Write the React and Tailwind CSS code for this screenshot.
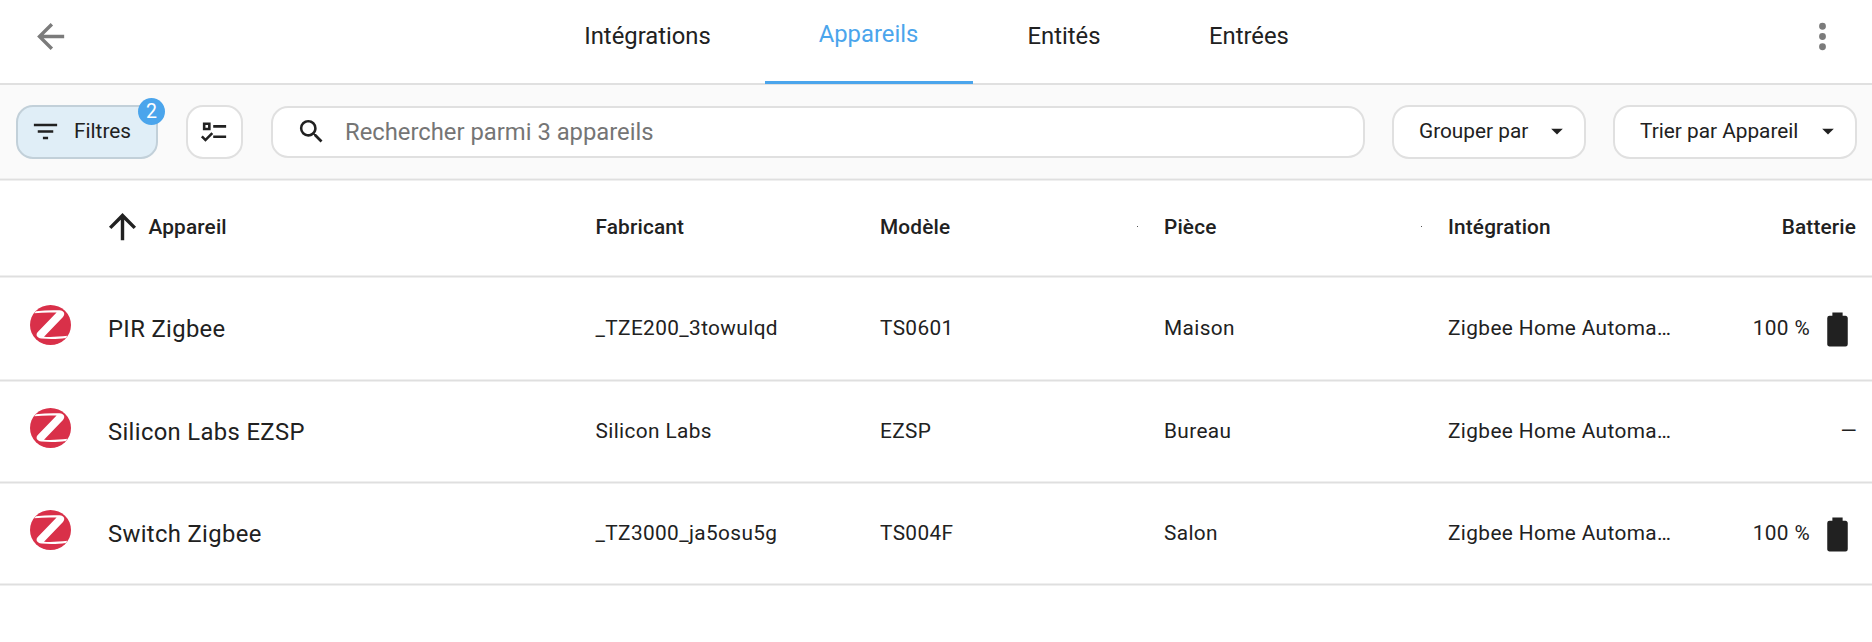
const COLS = 'grid-cols-[108px_487.5px_284.5px_284px_284px_284px_1fr]';

function Icon({ d, className }) {
  return (
    <svg viewBox="0 0 24 24" fill="currentColor" className={className}>
      <path d={d} />
    </svg>
  );
}

const ARROW_LEFT = 'M20 11v2H8l5.5 5.5-1.42 1.42L4.16 12l7.92-7.92L13.5 5.5 8 11h12Z';
const ARROW_UP = 'M13 20h-2V8l-5.5 5.5-1.42-1.42L12 4.16l7.92 7.92-1.42 1.42L13 8v12Z';
const DOTS = 'M12 16a2 2 0 1 1 0 4 2 2 0 0 1 0-4m0-6a2 2 0 1 1 0 4 2 2 0 0 1 0-4m0-6a2 2 0 1 1 0 4 2 2 0 0 1 0-4Z';
const FILTER = 'M6 13h12v-2H6M3 6v2h18V6M10 18h4v-2h-4v2Z';
const CHECKLIST = 'M3 5h6v6H3V5m2 2v2h2V7H5m6 0h10v2H11V7m0 8h10v2H11v-2m-6 5-3.5-3.5 1.41-1.41L5 17.17l4.59-4.58L11 14l-6 6Z';
const SEARCH = 'M9.5 3A6.5 6.5 0 0 1 16 9.5c0 1.61-.59 3.09-1.56 4.23l.27.27h.79l5 5-1.5 1.5-5-5v-.79l-.27-.27A6.516 6.516 0 0 1 9.5 16 6.5 6.5 0 0 1 3 9.5 6.5 6.5 0 0 1 9.5 3m0 2C7 5 5 7 5 9.5S7 14 9.5 14 14 12 14 9.5 12 5 9.5 5Z';
const CARET = 'm7 10 5 5 5-5H7Z';
const BATTERY = 'M16.67 4H15V2H9v2H7.33A1.33 1.33 0 0 0 6 5.33v15.34C6 21.4 6.6 22 7.33 22h9.34A1.33 1.33 0 0 0 18 20.67V5.33C18 4.6 17.4 4 16.67 4Z';

function ZigbeeLogo() {
  return (
    <svg viewBox="0 0 41 40" className="h-10 w-[41px]">
      <ellipse cx="20.5" cy="20" rx="20.5" ry="20" fill="#d93049" />
      <path
        fill="#fff"
        d="M6 6.3C14 5.2 22 5 29.5 5.3C34 5.6 35.6 9 33 12L14 31.7C21 32.2 29 31.7 37.5 30.8L35.7 33C28 34.2 19 34.2 11.500 33.6C6.500 33 5.300 29.500 8 26.800L26.600 7.600C19 7.200 12 7.400 4.300 8.300Z"
      />
    </svg>
  );
}

function Rule() {
  return <div className="h-[3px] border-y border-[#efefef] bg-[#dfdfdf]" />;
}

const rows = [
  { name: 'PIR Zigbee', maker: '_TZE200_3towulqd', model: 'TS0601', area: 'Maison', battery: '100 %', h: 'h-[101px]' },
  { name: 'Silicon Labs EZSP', maker: 'Silicon Labs', model: 'EZSP', area: 'Bureau', battery: null, h: 'h-[99px]' },
  { name: 'Switch Zigbee', maker: '_TZ3000_ja5osu5g', model: 'TS004F', area: 'Salon', battery: '100 %', h: 'h-[99px]' },
];

function Dropdown({ label, width }) {
  return (
    <button className={`flex h-[54px] shrink-0 items-center justify-between rounded-[17px] border-2 border-[#e0e0e0] bg-white pr-[13px] pl-[25px] ${width}`}>
      <span className="text-[20.8px]">{label}</span>
      <Icon d={CARET} className="mb-px size-[28px]" />
    </button>
  );
}

export default function App() {
  return (
    <div className="h-[642px] w-[1872px] overflow-hidden bg-white font-[Roboto,sans-serif] whitespace-nowrap text-[#212121]">
      <header className="flex h-[85px] justify-between border-b-2 border-[#e0e0e0] pr-[29px] pl-[30px]">
        <Icon d={ARROW_LEFT} className="mt-4 size-[41px] text-[#7b7b7b]" />
        <nav className="flex h-[84px] text-[23.8px]">
          <div className="flex h-[74px] w-[235px] items-center justify-center pl-px">Intégrations</div>
          <div className="flex w-[208px] justify-center border-b-[3px] border-[#4ba5ec] text-[#4ba5ec]">
            <span className="flex h-[70px] items-center">Appareils</span>
          </div>
          <div className="flex h-[74px] w-[182px] items-center justify-center pl-px">Entités</div>
          <div className="flex h-[74px] w-[189px] items-center justify-center">Entrées</div>
        </nav>
        <Icon d={DOTS} className="mt-4 size-[41px] text-[#7b7b7b]" />
      </header>

      <div className="flex h-[93px] items-center bg-[#fafafa] pr-[15px] pl-4">
        <button className="relative flex h-[54px] w-[142px] shrink-0 items-center rounded-[17px] border-2 border-[#c2d0d9] bg-[#e0eef7] pl-3">
          <Icon d={FILTER} className="mb-px size-[31px]" />
          <span className="ml-[13px] text-[20.8px]">Filtres</span>
          <span className="absolute -top-[9px] -right-[9px] flex size-[27px] items-center justify-center rounded-full bg-[#4ba5ec] pt-px text-[19.5px] text-white">2</span>
        </button>
        <button className="ml-7 flex h-[54px] w-[57px] shrink-0 items-center justify-center rounded-[17px] border-2 border-[#e0e0e0] bg-white">
          <Icon d={CHECKLIST} className="mb-px size-[31px]" />
        </button>
        <div className="ml-7 flex h-[52px] flex-1 items-center rounded-[17px] border-2 border-[#e0e0e0] bg-white pl-[23px]">
          <Icon d={SEARCH} className="size-[31px]" />
          <span className="ml-[18px] pt-[2px] text-[23.8px] text-[#757575]">Rechercher parmi 3 appareils</span>
        </div>
        <div className="ml-[27px] flex gap-[27px]">
          <Dropdown label="Grouper par" width="w-[194px]" />
          <Dropdown label="Trier par Appareil" width="w-[244px]" />
        </div>
      </div>
      <Rule />

      <div className={`grid h-[94px] items-center pr-4 text-[20.8px] font-medium tracking-[0.15px] ${COLS}`}>
        <span />
        <span className="flex items-center">
          <Icon d={ARROW_UP} className="mb-1 -ml-[6px] size-[41px]" />
          <span className="ml-[5.5px]">Appareil</span>
        </span>
        <span>Fabricant</span>
        <span>Modèle</span>
        <span className="relative">
          Pièce
          <i className="absolute top-[14px] -left-[27px] size-px bg-[#555]" />
        </span>
        <span className="relative">
          Intégration
          <i className="absolute top-[14px] -left-[27px] size-px bg-[#555]" />
        </span>
        <span className="text-right">Batterie</span>
      </div>
      <Rule />

      {rows.map((r) => (
        <div key={r.name}>
          <div className={`grid items-center pr-4 text-[20.8px] tracking-[0.38px] ${r.h} ${COLS}`}>
            <span className="-mt-2 pl-[30px]">
              <ZigbeeLogo />
            </span>
            <span className="pt-[2px] text-[23.8px] tracking-[0.35px]">{r.name}</span>
            <span>{r.maker}</span>
            <span>{r.model}</span>
            <span>{r.area}</span>
            <span>Zigbee Home Automa…</span>
            {r.battery ? (
              <span className="flex items-center justify-end">
                {r.battery}
                <Icon d={BATTERY} className="mt-px -mr-[2px] ml-[7px] size-[41px]" />
              </span>
            ) : (
              <span className="-mr-px text-right">—</span>
            )}
          </div>
          <Rule />
        </div>
      ))}
    </div>
  );
}
